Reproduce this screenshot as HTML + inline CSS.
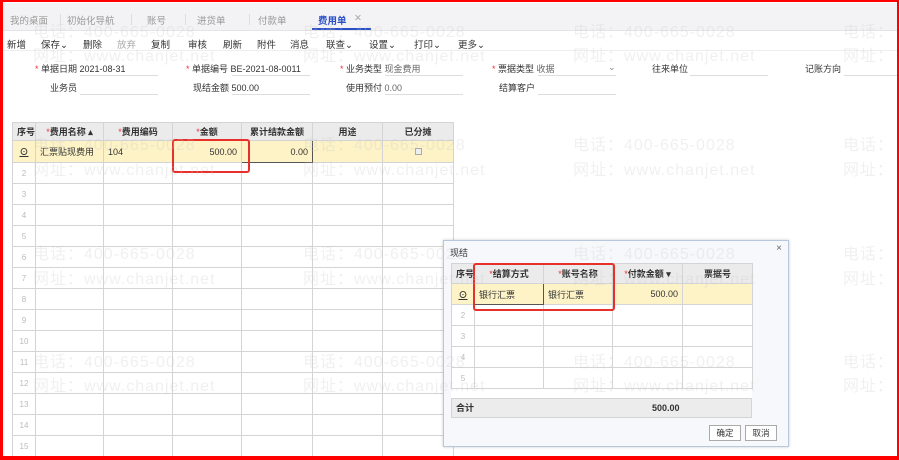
<!DOCTYPE html>
<html><head><meta charset="utf-8"><style>
*{box-sizing:border-box;margin:0;padding:0}
body{width:899px;height:460px;overflow:hidden;background:#fff;font-family:"Liberation Sans","Noto Sans CJK SC",sans-serif;font-size:9px;color:#333;position:relative}
.abs{position:absolute}
.frame{position:absolute;left:0;top:0;width:899px;height:460px;border:2px solid #f00;border-left-width:3px;border-bottom-width:4px;z-index:50;pointer-events:none}
.tabs{position:absolute;left:3px;top:3px;width:894px;height:28px;background:#f3f3f5;border-bottom:1px solid #e4e4e8}
.tab{position:absolute;top:13px;color:#999;font-size:9.5px}
.tb{position:absolute;top:37px;font-size:9.5px;color:#333}
.wm{position:absolute;color:rgba(200,200,200,.28);font-size:16px;letter-spacing:1px;white-space:nowrap;z-index:40}
.lbl{position:absolute;font-size:9px;color:#333}
.line{position:absolute;height:1px;background:#ddd}
table{border-collapse:collapse;position:absolute;table-layout:fixed}
td,th{border:1px solid #d4d4d4;font-size:9px;padding:0 4px;white-space:nowrap;overflow:hidden}
th{background:#ebebeb;font-weight:bold;color:#333;text-align:center}
.st{color:#e33;font-weight:normal}
.n{color:#bbb;font-size:8px;text-align:center;padding:0}
.y td{background:#fdf3c6}
.r{text-align:right}
.red{position:absolute;border:2px solid #e8302a;border-radius:3px;z-index:30}
</style></head><body>
<div class="tabs"></div>
<div class="tab" style="left:10px">我的桌面</div>
<div class="tab" style="left:67px">初始化导航</div>
<div class="tab" style="left:147px">账号</div>
<div class="tab" style="left:197px">进货单</div>
<div class="tab" style="left:258px">付款单</div>
<div class="tab" style="left:318px;color:#2a4fc7;font-weight:bold">费用单</div>
<div class="tab" style="left:354px;color:#aaa">✕</div>
<div class="abs" style="left:312px;top:28px;width:59px;height:2px;background:#2a4fc7"></div>
<div class="abs" style="left:60px;top:14px;width:1px;height:11px;background:#ddd"></div>
<div class="abs" style="left:131px;top:14px;width:1px;height:11px;background:#ddd"></div>
<div class="abs" style="left:185px;top:14px;width:1px;height:11px;background:#ddd"></div>
<div class="abs" style="left:249px;top:14px;width:1px;height:11px;background:#ddd"></div>
<div class="abs" style="left:3px;top:31px;width:894px;height:20px;background:#fff;border-bottom:1px solid #eee"></div>
<div class="tb" style="left:7px">新增</div>
<div class="tb" style="left:41px">保存⌄</div>
<div class="tb" style="left:83px">删除</div>
<div class="tb" style="left:117px;color:#aaa">放弃</div>
<div class="tb" style="left:151px">复制</div>
<div class="tb" style="left:188px">审核</div>
<div class="tb" style="left:223px">刷新</div>
<div class="tb" style="left:257px">附件</div>
<div class="tb" style="left:290px">消息</div>
<div class="tb" style="left:326px">联查⌄</div>
<div class="tb" style="left:369px">设置⌄</div>
<div class="tb" style="left:414px">打印⌄</div>
<div class="tb" style="left:458px">更多⌄</div>

<div class="lbl" style="left:35px;top:62px"><span class="st">*</span> 单据日期 2021-08-31</div>
<div class="line" style="left:80px;top:75px;width:78px"></div>
<div class="lbl" style="left:50px;top:81px">业务员</div>
<div class="line" style="left:80px;top:94px;width:78px"></div>
<div class="lbl" style="left:186px;top:62px"><span class="st">*</span> 单据编号 BE-2021-08-0011</div>
<div class="line" style="left:232px;top:75px;width:78px"></div>
<div class="lbl" style="left:193px;top:81px">现结金额 500.00</div>
<div class="line" style="left:232px;top:94px;width:78px"></div>
<div class="lbl" style="left:340px;top:62px"><span class="st">*</span> 业务类型 <span style="color:#666">现金费用</span></div>
<div class="line" style="left:385px;top:75px;width:78px"></div>
<div class="lbl" style="left:346px;top:81px">使用预付 <span style="color:#666">0.00</span></div>
<div class="line" style="left:385px;top:94px;width:78px"></div>
<div class="lbl" style="left:492px;top:62px"><span class="st">*</span> 票据类型 <span style="color:#666">收据</span></div>
<div class="lbl" style="left:608px;top:62px;color:#888">⌄</div>
<div class="line" style="left:538px;top:75px;width:78px"></div>
<div class="lbl" style="left:499px;top:81px">结算客户</div>
<div class="line" style="left:538px;top:94px;width:78px"></div>
<div class="lbl" style="left:652px;top:62px">往来单位</div>
<div class="line" style="left:690px;top:75px;width:78px"></div>
<div class="lbl" style="left:805px;top:62px">记账方向</div>
<div class="line" style="left:844px;top:75px;width:53px"></div>

<table style="left:12px;top:122px;width:441px">
<colgroup><col style="width:23px"><col style="width:68px"><col style="width:69px"><col style="width:69px"><col style="width:71px"><col style="width:70px"><col style="width:71px"></colgroup>
<tr style="height:18px"><th>序号</th><th><span class="st">*</span>费用名称 ▴</th><th><span class="st">*</span>费用编码</th><th><span class="st">*</span>金额</th><th>累计结款金额</th><th>用途</th><th>已分摊</th></tr>
<tr class="y" style="height:22px"><td style="text-align:center;font-weight:bold;padding:0"><u>⊙</u></td><td>汇票贴现费用</td><td>104</td><td class="r">500.00</td><td class="r" style="border:1px solid #555">0.00</td><td></td><td style="text-align:center"><span style="display:inline-block;width:7px;height:7px;border:1px solid #aaa;background:#eee"></span></td></tr>
<tr style="height:21px"><td class="n">2</td><td></td><td></td><td></td><td></td><td></td><td></td></tr>
<tr style="height:21px"><td class="n">3</td><td></td><td></td><td></td><td></td><td></td><td></td></tr>
<tr style="height:21px"><td class="n">4</td><td></td><td></td><td></td><td></td><td></td><td></td></tr>
<tr style="height:21px"><td class="n">5</td><td></td><td></td><td></td><td></td><td></td><td></td></tr>
<tr style="height:21px"><td class="n">6</td><td></td><td></td><td></td><td></td><td></td><td></td></tr>
<tr style="height:21px"><td class="n">7</td><td></td><td></td><td></td><td></td><td></td><td></td></tr>
<tr style="height:21px"><td class="n">8</td><td></td><td></td><td></td><td></td><td></td><td></td></tr>
<tr style="height:21px"><td class="n">9</td><td></td><td></td><td></td><td></td><td></td><td></td></tr>
<tr style="height:21px"><td class="n">10</td><td></td><td></td><td></td><td></td><td></td><td></td></tr>
<tr style="height:21px"><td class="n">11</td><td></td><td></td><td></td><td></td><td></td><td></td></tr>
<tr style="height:21px"><td class="n">12</td><td></td><td></td><td></td><td></td><td></td><td></td></tr>
<tr style="height:21px"><td class="n">13</td><td></td><td></td><td></td><td></td><td></td><td></td></tr>
<tr style="height:21px"><td class="n">14</td><td></td><td></td><td></td><td></td><td></td><td></td></tr>
<tr style="height:21px"><td class="n">15</td><td></td><td></td><td></td><td></td><td></td><td></td></tr>
</table>
<div class="red" style="left:172px;top:139px;width:78px;height:34px"></div>

<div class="abs" style="left:443px;top:240px;width:346px;height:207px;background:#f6f8fb;border:1px solid #b8c8dc;box-shadow:0 0 3px rgba(0,0,0,.2);z-index:20">
<div class="abs" style="left:6px;top:5px;font-size:9px">现结</div>
<div class="abs" style="right:6px;top:2px;font-size:10px;color:#666">×</div>
<div class="abs" style="left:7px;top:22px;width:301px;height:148px;background:#fff"></div>
<table style="left:7px;top:22px;width:301px">
<colgroup><col style="width:23px"><col style="width:69px"><col style="width:69px"><col style="width:70px"><col style="width:70px"></colgroup>
<tr style="height:20px"><th>序号</th><th><span class="st">*</span>结算方式</th><th><span class="st">*</span>账号名称</th><th><span class="st">*</span>付款金额 ▾</th><th>票据号</th></tr>
<tr class="y" style="height:21px"><td style="text-align:center;font-weight:bold;padding:0"><u>⊙</u></td><td style="border:1px solid #555">银行汇票</td><td>银行汇票</td><td class="r">500.00</td><td></td></tr>
<tr style="height:21px"><td class="n">2</td><td></td><td></td><td></td><td></td></tr>
<tr style="height:21px"><td class="n">3</td><td></td><td></td><td></td><td></td></tr>
<tr style="height:21px"><td class="n">4</td><td></td><td></td><td></td><td></td></tr>
<tr style="height:21px"><td class="n">5</td><td></td><td></td><td></td><td></td></tr>
</table>
<div class="abs" style="left:7px;top:157px;width:301px;height:20px;background:#ececec;border:1px solid #d4d4d4;font-weight:bold;font-size:9px;line-height:18px;padding-left:4px">合计<span style="position:absolute;left:200px">500.00</span></div>
<div class="abs" style="left:265px;top:184px;width:32px;height:16px;border:1px solid #aaa;background:#fff;font-size:8.5px;text-align:center;line-height:14px">确定</div>
<div class="abs" style="left:301px;top:184px;width:32px;height:16px;border:1px solid #aaa;background:#fff;font-size:8.5px;text-align:center;line-height:14px">取消</div>
</div>
<div class="red" style="left:473px;top:263px;width:142px;height:48px"></div>

<div class="wm" style="left:33px;top:18px">电话：400-665-0028</div><div class="wm" style="left:33px;top:42px">网址：www.chanjet.net</div>
<div class="wm" style="left:303px;top:18px">电话：400-665-0028</div><div class="wm" style="left:303px;top:42px">网址：www.chanjet.net</div>
<div class="wm" style="left:573px;top:18px">电话：400-665-0028</div><div class="wm" style="left:573px;top:42px">网址：www.chanjet.net</div>
<div class="wm" style="left:843px;top:18px">电话：</div><div class="wm" style="left:843px;top:42px">网址：</div>
<div class="wm" style="left:33px;top:131px">电话：400-665-0028</div><div class="wm" style="left:33px;top:156px">网址：www.chanjet.net</div>
<div class="wm" style="left:303px;top:131px">电话：400-665-0028</div><div class="wm" style="left:303px;top:156px">网址：www.chanjet.net</div>
<div class="wm" style="left:573px;top:131px">电话：400-665-0028</div><div class="wm" style="left:573px;top:156px">网址：www.chanjet.net</div>
<div class="wm" style="left:843px;top:131px">电话：</div><div class="wm" style="left:843px;top:156px">网址：</div>
<div class="wm" style="left:33px;top:240px">电话：400-665-0028</div><div class="wm" style="left:33px;top:265px">网址：www.chanjet.net</div>
<div class="wm" style="left:303px;top:240px">电话：400-665-0028</div><div class="wm" style="left:303px;top:265px">网址：www.chanjet.net</div>
<div class="wm" style="left:573px;top:240px">电话：400-665-0028</div><div class="wm" style="left:573px;top:265px">网址：www.chanjet.net</div>
<div class="wm" style="left:843px;top:240px">电话：</div><div class="wm" style="left:843px;top:265px">网址：</div>
<div class="wm" style="left:33px;top:348px">电话：400-665-0028</div><div class="wm" style="left:33px;top:372px">网址：www.chanjet.net</div>
<div class="wm" style="left:303px;top:348px">电话：400-665-0028</div><div class="wm" style="left:303px;top:372px">网址：www.chanjet.net</div>
<div class="wm" style="left:573px;top:348px">电话：400-665-0028</div><div class="wm" style="left:573px;top:372px">网址：www.chanjet.net</div>
<div class="wm" style="left:843px;top:348px">电话：</div><div class="wm" style="left:843px;top:372px">网址：</div>
<div class="frame"></div>
</body></html>
